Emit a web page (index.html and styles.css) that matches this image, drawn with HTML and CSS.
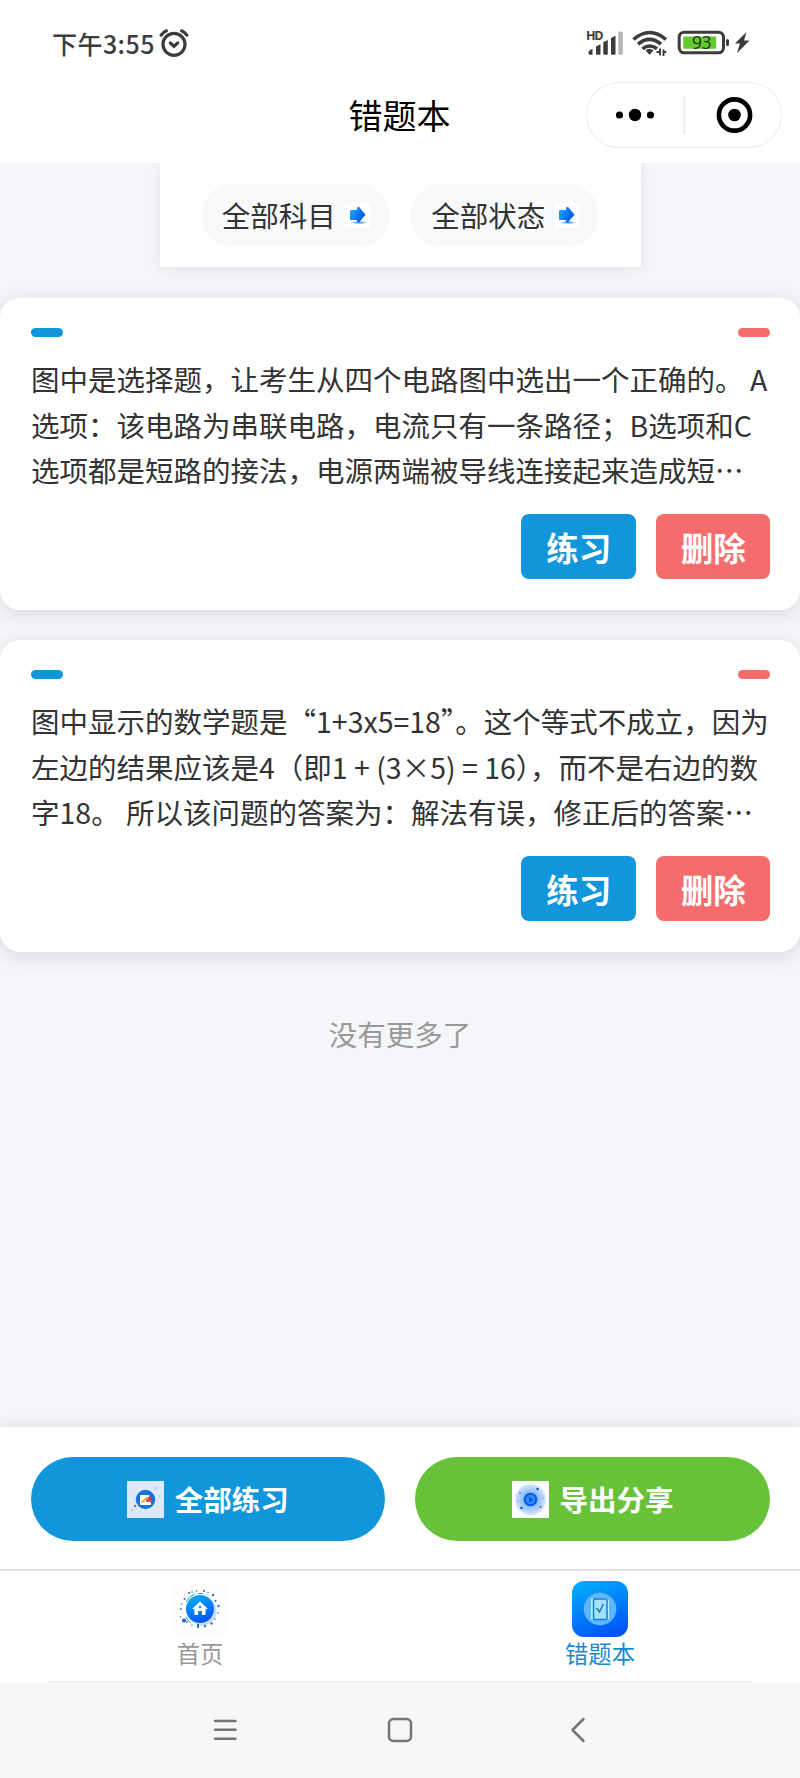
FILE: index.html
```
<!DOCTYPE html>
<html lang="zh-CN">

<head>
    <meta charset="UTF-8">
    <meta name="viewport" content="width=device-width, initial-scale=1.0">
    <title>错题本</title>
    <link rel="stylesheet" href="styles.css">
</head>

<body>
    <!-- 状态栏 -->
    <div class="status">
        <div class="time">
            <span>下午3:55</span>
            <svg width="30" height="28" viewBox="0 0 30 28" fill="none" stroke="#3c3c3c" stroke-width="3.2" stroke-linecap="round">
                <circle cx="15" cy="15.3" r="11"/>
                <path d="M11.3 14l3.7 3.3 3.7-3.3"/>
                <path d="M2.2 6.2q2-3 5.2-4.4M27.8 6.2q-2-3-5.2-4.4"/>
            </svg>
        </div>
        <div class="signals">
            <svg width="164" height="36" viewBox="0 -4 164 36">
                <text class="hd" x="0" y="9.6" textLength="17.500">HD</text>
                <path fill="#3c3c3c" d="M2.500 23.500V22q0-1 1-1.600l3-1.600v6H4q-1.500 0-1.500-1.300zM10 16.500l4.500-2.200v9.500q0 1-1 1H11q-1 0-1-1zM17.300 12.200l4.500-2.200v13.800q0 1-1 1h-2.500q-1 0-1-1zM25 8l4.500-2.200v18q0 1-1 1H26q-1 0-1-1z"/>
                <rect x="32.300" y="1.500" width="4.500" height="23.300" rx="1.500" fill="#b5b5b5"/>
                <g fill="none" stroke="#3c3c3c" stroke-width="3.600">
                    <path d="M47.500 9.500q16-14 32.500 0"/>
                    <path d="M52 14.200q11.500-9.600 23 0"/>
                    <path d="M56.500 18.800q7-5.600 14.500 0"/>
                </g>
                <path fill="#3c3c3c" d="M59.500 20.300q4-3 8 0l-4 4.700z"/>
                <path fill="none" stroke="#3c3c3c" stroke-width="1.900" d="M70.500 22H74V18.500V25.500M77.500 26V19.500v2.500h2.800"/>
                <rect x="93.200" y="2.200" width="44.300" height="20.600" rx="5" fill="none" stroke="#3c3c3c" stroke-width="3"/>
                <rect x="97.200" y="6.500" width="33" height="12.300" rx="1" fill="#66c92f"/>
                <text class="power" x="106" y="18.700" textLength="19.500">93</text>
                <path stroke="#3c3c3c" stroke-width="3" stroke-linecap="round" d="M141.500 10.500v4"/>
                <path fill="#3c3c3c" d="M160.500 2l-11.500 11.500h5l-3 9.500 12.500-12.500H158z"/>
            </svg>
        </div>
    </div>

    <!-- 导航栏 -->
    <div class="navbar">
        <h1 class="nav-title">错题本</h1>
        <div class="capsule">
            <svg width="196" height="66" viewBox="0 0 196 66">
                <circle cx="33.500" cy="33" r="3.600"/>
                <circle cx="49" cy="33" r="6.200"/>
                <circle cx="64.500" cy="33" r="3.600"/>
                <path stroke="#e6e6e6" stroke-width="1.500" d="M98.300 14v38"/>
                <circle cx="148.500" cy="33" r="15.600" fill="none" stroke="#000" stroke-width="4.600"/>
                <circle cx="148.500" cy="33" r="6.300"/>
            </svg>
        </div>
    </div>

    <svg class="defs" width="0" height="0">
        <defs>
            <linearGradient id="arrow" x1="0" x2="1" y1="0" y2=".6">
                <stop offset="0" stop-color="#19b5f8"/>
                <stop offset="1" stop-color="#0450f0"/>
            </linearGradient>
            <linearGradient id="app" x1=".2" x2=".6" y1="0" y2="1">
                <stop offset="0" stop-color="#02aefb"/>
                <stop offset="1" stop-color="#0154f6"/>
            </linearGradient>
            <radialGradient id="glow">
                <stop offset=".4" stop-color="#7db6fa"/>
                <stop offset="1" stop-color="#d9e8fd"/>
            </radialGradient>
            <radialGradient id="shade">
                <stop offset="0" stop-color="#2a8af5"/>
                <stop offset="1" stop-color="#fff"/>
            </radialGradient>
            <symbol id="go" viewBox="0 0 25 25">
                <rect width="25" height="25" fill="#fff"/>
                <ellipse cx="14" cy="19.500" rx="9" ry="1.800" fill="url(#shade)"/>
                <path fill="url(#arrow)" d="M5 8q0-1 1-1h6V4.500l2-.7 6.500 8-6.500 7.500-2-.5V17H6q-1 0-1-1z"/>
            </symbol>
        </defs>
    </svg>

    <div class="content">
        <!-- 筛选 -->
        <div class="filter">
            <div class="filter-item"><span>全部科目</span><svg width="25" height="25"><use href="#go"/></svg></div>
            <div class="filter-item"><span>全部状态</span><svg width="25" height="25"><use href="#go"/></svg></div>
        </div>

        <!-- 错题列表 -->
        <div class="card">
            <div class="card-head"><i class="tag"></i><i class="tag red"></i></div>
            <p class="question">图中是选择题，让考生从四个电路图中选出一个正确的。 A<br>选项：该电路为串联电路，电流只有一条路径；B选项和C<br>选项都是短路的接法，电源两端被导线连接起来造成短…</p>
            <div class="btns">
                <button class="btn">练习</button>
                <button class="btn red">删除</button>
            </div>
        </div>
        <div class="card">
            <div class="card-head"><i class="tag"></i><i class="tag red"></i></div>
            <p class="question">图中显示的数学题是“1+3x5=18”。这个等式不成立，因为<br>左边的结果应该是4（即1 + (3×5) = 16），而不是右边的数<br>字18。 所以该问题的答案为：解法有误，修正后的答案…</p>
            <div class="btns">
                <button class="btn">练习</button>
                <button class="btn red">删除</button>
            </div>
        </div>
        <p class="nomore">没有更多了</p>
    </div>

    <!-- 底部操作 -->
    <div class="actions">
        <button class="action">
            <svg width="37" height="37" viewBox="0 0 37 37">
                <rect width="37" height="37" fill="#dce9f8"/>
                <circle cx="18.500" cy="18.500" r="9.700" fill="#1273dc"/>
                <path fill="#fff" d="M13 14h9l2 8v2H13z"/>
                <path fill="#e5413c" d="M20 17l3-2 2 6h-6z"/>
                <path stroke="#f6a623" stroke-width="2" d="M14.500 21.500l6-5"/>
                <g fill="#a9c8ee"><circle cx="29.500" cy="7" r="1.200"/><circle cx="27" cy="9" r=".8"/><circle cx="33" cy="15" r="1"/><circle cx="5" cy="29" r="1.200"/><circle cx="13" cy="31" r=".7"/></g>
                <circle cx="8" cy="25" r="1.200" fill="#dc4b62"/>
            </svg>
            <span>全部练习</span>
        </button>
        <button class="action green">
            <svg width="37" height="37" viewBox="0 0 37 37">
                <rect width="37" height="37" fill="#fff"/>
                <circle cx="18.500" cy="18.500" r="15.500" fill="url(#glow)"/>
                <circle cx="18.500" cy="18.500" r="5.800" fill="#2f8ff8" stroke="#0757dd" stroke-width="2"/>
                <path fill="#0b5be0" d="M17 15.500l5 3-5 3z"/>
                <g fill="#1555c0"><circle cx="25.500" cy="8" r="1.300"/><circle cx="9.500" cy="27" r="1.300"/><circle cx="28.500" cy="26" r=".9"/><circle cx="8" cy="12" r=".8"/><circle cx="31" cy="17" r=".6"/><circle cx="6" cy="20" r=".6"/></g>
            </svg>
            <span>导出分享</span>
        </button>
    </div>

    <!-- tabBar -->
    <div class="tabbar">
        <div class="tab">
            <svg width="56" height="56" viewBox="0 0 56 56">
                <rect x="1" y="1" width="54" height="54" fill="#fdfdfc"/>
                <circle cx="30" cy="30" r="14.500" fill="#c9d9fa"/>
                <g fill="#2474d2">
                    <circle cx="17" cy="12" r="1"/><circle cx="20" cy="11" r=".8"/><circle cx="24.500" cy="10" r=".8"/><circle cx="32" cy="10" r="1"/><circle cx="36" cy="11.500" r=".7"/>
                    <circle cx="41" cy="14" r="1.200"/><circle cx="43.500" cy="20" r="1"/><circle cx="46.500" cy="25" r="1.200"/><circle cx="46" cy="32" r=".8"/><circle cx="43" cy="38" r=".8"/>
                    <circle cx="39.500" cy="42.500" r="1.200"/><circle cx="33" cy="45" r="1.200"/><circle cx="20" cy="44" r=".7"/><circle cx="15" cy="41" r=".9"/><circle cx="8.500" cy="36" r=".8"/>
                    <circle cx="9" cy="28" r=".9"/><circle cx="9.500" cy="23" r=".8"/><circle cx="12.500" cy="18" r="1"/>
                </g>
                <path fill="none" stroke="#3a9bea" d="M14 21q3-6 9-8M26 12.500h5M14 36q2 4 5 6"/>
                <circle cx="28" cy="28" r="14" fill="url(#app)"/>
                <path fill="#fff" d="M20.500 27.500l7.500-7 7.500 7-1 1.200-1-.9v6.200h-3.700v-4h-3.600v4h-3.700v-6.200l-1 .9z"/>
                <circle cx="28" cy="26" r="1.300" fill="#0b87e6"/>
                <circle cx="12" cy="39.500" r="2" fill="#1464c8"/>
                <path stroke="#1464c8" stroke-width="1.800" d="M26 43v4"/>
            </svg>
            <span>首页</span>
        </div>
        <div class="tab on">
            <svg width="56" height="56" viewBox="0 0 56 56">
                <rect width="56" height="56" rx="12" fill="url(#app)"/>
                <circle cx="28" cy="28" r="16.300" fill="#5eb7fb"/>
                <path fill="#bdefff" d="M19 17.500h15q3 0 3 3v18H19z"/>
                <rect x="21.500" y="18" width="13.500" height="20.500" rx="1" fill="#a4e2fb" stroke="#0c7fdc" stroke-width="1.500"/>
                <path fill="none" stroke="#0c6fc8" stroke-width="1.400" d="M24.500 27l3 4 4-8"/>
            </svg>
            <span>错题本</span>
        </div>
    </div>

    <!-- 系统按键 -->
    <div class="sysnav">
        <svg width="800" height="96" viewBox="0 0 800 96" fill="none" stroke="#757575" stroke-width="2.500" stroke-linecap="round" stroke-linejoin="round">
            <path stroke="#e9e9e9" stroke-width="1" d="M49 -.5h702"/>
            <path d="M215 39h20.500M215 47.800h20.500M215 56.700h20.500"/>
            <rect x="389" y="37" width="22" height="22" rx="4.500"/>
            <path d="M583.500 37l-11 11 11 11"/>
        </svg>
    </div>
</body>

</html>
```

FILE: styles.css
```
* {
    box-sizing: border-box;
}
body {
    margin: 0;
    width: 800px; height: 1778px;
    display: flex;
    flex-direction: column;
    background-color: #f4f6fa;
    color: #333;
    font-family: "Noto Sans CJK SC", sans-serif;
    font-size: 28.5px;
}
svg {
    display: block;
    flex: none;
}
p, h1 {
    margin: 0;
}
button {
    border: 0;
    padding: 0;
    color: #fff;
    font-family: inherit;
    font-weight: bold;
}
.defs {
    position: absolute;
}

/* 状态栏 */
.status {
    height: 82px;
    padding: 6px 50px 0 52px;
    display: flex;
    align-items: center;
    justify-content: space-between;
    background-color: #fff;
    color: #3c3c3c;
}
.time {
    display: flex;
    align-items: center;
    gap: 4px;
    font-size: 25px;
    font-weight: 500;
    letter-spacing: .45px;
}
.time span {
    margin-top: -2px;
}
.time svg {
    margin-top: -2px;
}
.hd {
    font: bold 12.5px "Open Sans", sans-serif;
    fill: #3c3c3c;
}
.power {
    font: 500 17.5px "Open Sans", sans-serif;
    fill: #173d08;
}

/* 导航栏 */
.navbar {
    height: 81px;
    padding: 0 18px 16px 0;
    display: grid;
    grid-template-columns: 1fr auto;
    align-items: center;
    background-color: #fff;
}
.nav-title {
    padding: 0 0 2px 213px;
    color: #000;
    font-size: 34px;
    font-weight: 400;
    text-align: center;
}
.capsule {
    width: 196px; height: 66px;
    border-radius: 33px;
    box-shadow: inset 0 0 0 1px #ebebeb;
}

.content {
    flex: 1;
    overflow: hidden;
}
.filter {
    width: 481px; height: 104px;
    margin: 0 auto 31px;
    padding-top: 21px;
    display: flex;
    justify-content: center;
    gap: 20.5px;
    background-color: #fff;
    box-shadow: 0 2px 12px rgba(0, 0, 0, .08);
}
.filter-item {
    width: 189px; height: 63px;
    padding: 0 20px 0 21px;
    display: flex;
    align-items: center;
    justify-content: space-between;
    border-radius: 32px;
    background-color: #f8f9fb;
}
.filter-item span {
    margin-top: -2px;
}

.card {
    height: 312px;
    margin-bottom: 30px;
    padding: 30px 30px 0 30.5px;
    border-radius: 20px;
    background-color: #fff;
    box-shadow: 0 4px 20px rgba(30, 20, 50, .12);
}
.card-head {
    display: flex;
    justify-content: space-between;
}
.tag {
    width: 32.5px; height: 9px;
    border-radius: 4.5px;
    background-color: #1296db;
}
.question {
    margin: 19px 0 21px .5px;
    line-height: 45.5px;
    white-space: nowrap;
}
.btns {
    display: flex;
    justify-content: flex-end;
    gap: 20px;
}
.btn {
    width: 114.5px; height: 65px;
    padding-left: 1px;
    border-radius: 8px;
    background-color: #1296db;
    font-size: 32.5px;
}
.red {
    background-color: #f56c6c;
}
.nomore {
    padding-top: 31px;
    color: #999;
    text-align: center;
}

/* 底部操作 */
.actions {
    height: 142px;
    padding: 30px 30px 0 30.5px;
    display: flex;
    gap: 30px;
    background-color: #fff;
    box-shadow: 0 -2px 12px rgba(0, 0, 0, .09);
    z-index: 1;
}
.action {
    flex: 1;
    height: 84px;
    display: flex;
    align-items: center;
    justify-content: center;
    gap: 11px;
    border-radius: 42px;
    background-color: #1296db;
    font-size: 28.5px;
}
.action span {
    margin-top: -2px;
}
.green {
    background-color: #67c23a;
}

.tabbar {
    height: 113px;
    padding-top: 10px;
    display: flex;
    border-top: 2px solid #e2e2e2;
    background-color: #fff;
    z-index: 1;
}
.tab {
    flex: 1;
    display: flex;
    flex-direction: column;
    align-items: center;
    color: #999;
    font-size: 23.3px;
    line-height: 32px;
}
.on {
    color: #1989cf;
}

.sysnav {
    height: 96px;
    background-color: #f7f7f7;
}
.sysnav svg {
    overflow: visible;
    position: relative;
    z-index: 2;
}
```
